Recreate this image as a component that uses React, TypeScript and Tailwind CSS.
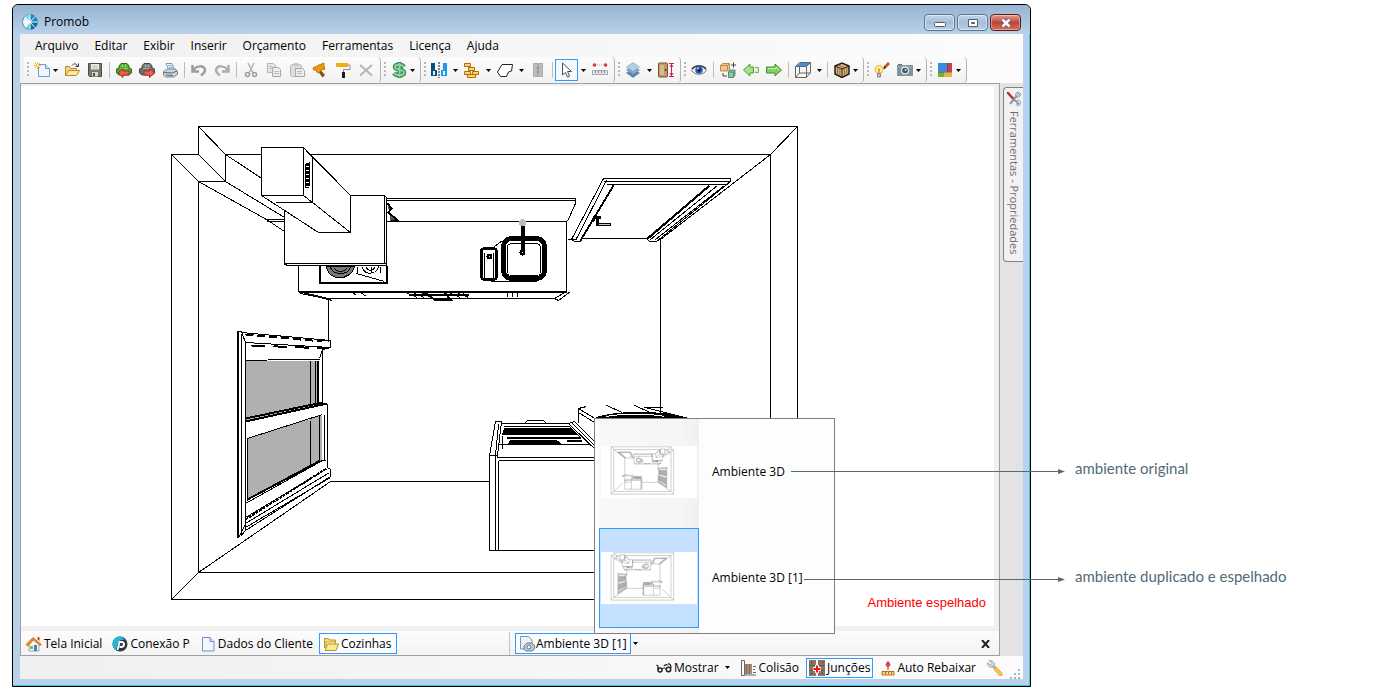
import type { ReactNode } from 'react';
import clsx from 'clsx';

const menuItems = ['Arquivo', 'Editar', 'Exibir', 'Inserir', 'Orçamento', 'Ferramentas', 'Licença', 'Ajuda'];

function Icon({ children }: { children: ReactNode }) {
  return (
    <svg viewBox="0 0 16 16" className="size-4 shrink-0" fill="none" aria-hidden="true">
      {children}
    </svg>
  );
}

const icons = {
  novo: (
    <Icon>
      <path d="M4.500 2.500h7l4 4v8h-11z" fill="#eef6ff" stroke="#6f9fd0" />
      <path d="M11.500 2.500v4h4" fill="#cfe2f7" stroke="#6f9fd0" />
      <path d="M3.500 0v7M0 3.500h7M1 1l5 5M6 1L1 6" stroke="#f2b632" />
      <circle cx="3.500" cy="3.500" r="1.200" fill="#fff3b8" />
    </Icon>
  ),
  abrir: (
    <Icon>
      <path d="M1.500 13.500v-9h4l1 2h6v2" fill="#f6d77b" stroke="#b58a2a" />
      <path d="M1.500 13.500l3-5h11l-3 5z" fill="#fbe7a0" stroke="#b58a2a" />
      <path d="M8 3.500c2-2.500 4.500-2 5.500.5M14.500 1.500v3h-3" stroke="#333" />
    </Icon>
  ),
  salvar: (
    <Icon>
      <path d="M1.500 1.500h13v13h-12l-1-1z" fill="#777a70" stroke="#4a4d44" />
      <path d="M4 2h8v5.500H4z" fill="#eef0ea" />
      <path d="M5 10h6v4.500H5z" fill="#d5d8cf" />
      <path d="M6 11h2v3H6z" fill="#4a4d44" />
      <path d="M5 4h6M5 6h6" stroke="#b8bbb2" />
    </Icon>
  ),
  sofaVerde: (
    <Icon>
      <path d="M3 4l2-2.500h6L13 4v2l2.500 1v4L13 13H3L.500 11V7L3 6z" fill="#4aa62a" stroke="#2d6f14" />
      <path d="M4 6.500h8M4.500 4h7M6.500 2v4M9.500 2v4" stroke="#86cf62" />
      <path d="M2 11l5-4.500v2.500h6v4H7v2.500z" fill="#e8604c" stroke="#a83020" />
    </Icon>
  ),
  sofaCinza: (
    <Icon>
      <path d="M3 4l2-2.500h6L13 4v2l2.500 1v4L13 13H3L.500 11V7L3 6z" fill="#6e6e6e" stroke="#444" />
      <path d="M4 6.500h8M4.500 4h7M6.500 2v4M9.500 2v4" stroke="#a4a4a4" />
      <path d="M15.500 11l-5-4.500v2.500H5v4h5.500v2.500z" fill="#e8604c" stroke="#a83020" />
    </Icon>
  ),
  imprimir: (
    <Icon>
      <path d="M4 1.500h6l2.500 6h-6z" fill="#eef5ff" stroke="#8799ad" />
      <path d="M1.500 9.500l4-2.500h8l2 3v2.500l-4 2.500h-8l-2-2z" fill="#cdd3da" stroke="#7c8590" />
      <path d="M2 10.500l8 .5 5-2M4 13l7 .5" stroke="#5f6771" />
      <path d="M6 3.500h4M7 5.500h4" stroke="#7fb0e6" />
    </Icon>
  ),
  desfazer: (
    <Icon>
      <path d="M1.500 3v6.500H8M2 9c3-6 12-6 12-1 0 2-2 4-4 5.500" stroke="#9b9b9b" strokeWidth="2.500" />
    </Icon>
  ),
  refazer: (
    <Icon>
      <path d="M14.500 3v6.500H8M14 9C11 3 2 3 2 8c0 2 2 4 4 5.500" stroke="#adadad" strokeWidth="2.500" />
    </Icon>
  ),
  recortar: (
    <Icon>
      <path d="M5 1l5 10M11 1L6 11" stroke="#b3b3b3" strokeWidth="1.500" />
      <circle cx="4.500" cy="12.500" r="2" stroke="#9d9d9d" strokeWidth="1.500" />
      <circle cx="11.500" cy="12.500" r="2" stroke="#9d9d9d" strokeWidth="1.500" />
    </Icon>
  ),
  copiar: (
    <Icon>
      <path d="M1.500 1.500h6l2 2v7h-8z" fill="#e6e6e6" stroke="#b5b5b5" />
      <path d="M6.500 5.500h6l2 2v7h-8z" fill="#ededed" stroke="#a8a8a8" />
      <path d="M8 9.500h5M8 11.500h5M3 4.500h3M3 6.500h3" stroke="#bdbdbd" />
    </Icon>
  ),
  colar: (
    <Icon>
      <rect x="1.500" y="2.500" width="11" height="12" rx="2" fill="#dedede" stroke="#b5b5b5" />
      <rect x="4.500" y="1" width="5" height="3" rx="1" fill="#c4c4c4" />
      <path d="M6.500 6.500h7l2 2v6h-9z" fill="#ededed" stroke="#a8a8a8" />
      <path d="M8 9.500h5M8 11.500h5" stroke="#bdbdbd" />
    </Icon>
  ),
  martelo: (
    <Icon>
      <path d="M7 6l6 7-2.500 2.500L5 8z" fill="#8a5410" />
      <path d="M1 6l6-3 5-2v3l1 3-4 1-2 3-2.500-1v-2H1.500z" fill="#e79a10" stroke="#c07c0a" />
    </Icon>
  ),
  rolo: (
    <Icon>
      <path d="M1 1h12v4H1z" fill="#f4ac12" />
      <path d="M13 3h2v4.500H8.500V11" stroke="#8a8a8a" />
      <path d="M7 10h3v6H7z" fill="#1d1d1d" />
    </Icon>
  ),
  excluir: (
    <Icon>
      <path d="M2 3l12 10.500M14 3L2 13.500" stroke="#b5b5b5" strokeWidth="2" />
    </Icon>
  ),
  dinheiro: (
    <Icon>
      <path d="M13 5C11 2 4 2 4 5c0 3.500 9 2 9 5.500 0 3.500-8 3.500-10 .5M8.500 0v16" stroke="#3b8a58" strokeWidth="4.500" />
      <path d="M13 5C11 2 4 2 4 5c0 3.500 9 2 9 5.500 0 3.500-8 3.500-10 .5M8.500 1v14" stroke="#86d6a0" strokeWidth="2" />
    </Icon>
  ),
  espelhar: (
    <Icon>
      <path d="M0 1h4v7h2v6H0z" fill="#0b4f80" />
      <path d="M16 1h-4v7h-2v6h6z" fill="#1c9bea" />
      <path d="M2 9h2v4H2zM12 9h2v4h-2z" fill="#e6f3fc" />
      <path d="M8 0v16" stroke="#111" strokeDasharray="2 1" />
    </Icon>
  ),
  tijolos: (
    <Icon>
      <path d="M.500 1.500h6v3h-6zM4.500 5.500h6v3h-6zM.500 9.500h6v3h-6zM8.500 9.500h6v3h-6zM3.500 12.500h8v3h-8z" fill="#ffd478" stroke="#b06e00" />
    </Icon>
  ),
  forma: (
    <Icon>
      <path d="M5 2.500h10.500l-1 6.500-3 1-2 4.500h-6l-3-4.500z" fill="#fff" stroke="#222" />
    </Icon>
  ),
  grade: (
    <Icon>
      <path d="M3 1h10v14H3z" fill="#bdbdbd" />
      <path d="M8 1v14M6 6h4M6 10h4" stroke="#949494" />
      <path d="M3.500 1.500h9v13h-9z" stroke="#adadad" />
    </Icon>
  ),
  cursor: (
    <Icon>
      <path d="M3.500 1v12l3-2.500 2 4.500 2-1-2-4.500h4z" fill="#fff" stroke="#4d4d4d" />
    </Icon>
  ),
  regua: (
    <Icon>
      <circle cx="2.500" cy="3" r="1.800" fill="#d23a3a" />
      <circle cx="13.500" cy="3" r="1.800" fill="#d23a3a" />
      <path d="M5 3h6" stroke="#aaa" strokeDasharray="1 1" />
      <path d="M.500 8.500h15v4H.500z" fill="#e3e5e9" stroke="#a5a9af" />
      <path d="M3.500 9v2M6.500 9v2M9.500 9v2M12.500 9v2" stroke="#7d8187" />
    </Icon>
  ),
  camadas: (
    <Icon>
      <path d="M8 7l6.500 4L8 15.500 1.500 11z" fill="#5d86ae" stroke="#486e94" strokeWidth=".5" />
      <path d="M8 4l6.500 4L8 12.500 1.500 8z" fill="#83a9cd" stroke="#56799c" strokeWidth=".5" />
      <path d="M8 .500L14.500 5 8 9.500 1.500 5z" fill="#b3cfe8" stroke="#6f93b8" strokeWidth=".5" />
    </Icon>
  ),
  porta: (
    <Icon>
      <rect x=".5" y="1" width="9" height="14" rx="1" fill="#c19a6b" stroke="#74532d" />
      <path d="M2 3h4v10H2z" fill="#d9b98e" />
      <circle cx="7.500" cy="8" r="1" fill="#533" />
      <path d="M11 1.500h5M11 14.500h5M13.500 2v12M12 5l1.500-2.500L15 5M12 11l1.500 2.500L15 11" stroke="#d8145a" />
    </Icon>
  ),
  olho: (
    <Icon>
      <path d="M.500 8.500C4 2.500 12 2.500 15.500 8.500 12 13.500 4 13.500.500 8.500z" fill="#e9eef5" stroke="#777f8c" />
      <path d="M1 7C4 2.500 12 2.500 15 7" stroke="#444" strokeWidth="1.500" />
      <circle cx="8" cy="8" r="3.700" fill="#2a58ad" />
      <circle cx="8" cy="8" r="1.600" fill="#0a1638" />
      <circle cx="7" cy="6.500" r="1" fill="#cfe0ff" />
    </Icon>
  ),
  cubos: (
    <Icon>
      <path d="M.500 3.500l2-2h7V7l-2 2h-7z" fill="#efc489" stroke="#b98a4a" />
      <path d="M.500 3.500h7v5M7.500 3.500l2-2" stroke="#b98a4a" />
      <path d="M8.500 10l1.500-2h5v5l-1.500 2.500h-5z" fill="#8fc9ae" stroke="#4d8c70" />
      <path d="M8.500 10h5v5" stroke="#4d8c70" />
      <path d="M11 3h5M13.500 .5v5M3 11v3h4" stroke="#444" />
    </Icon>
  ),
  anterior: (
    <Icon>
      <path d="M.500 8L7 2v3h3.500v6H7v3z" fill="#a8e08c" stroke="#4f9c35" />
      <path d="M12 5.500h3.500v5H12" fill="#d9f4cb" stroke="#6fb356" />
    </Icon>
  ),
  proximo: (
    <Icon>
      <path d="M15.500 8L9 2v3H.500v6H9v3z" fill="#7fd35c" stroke="#3f8c28" />
      <path d="M2 6.500h8V5l3 3" stroke="#c6f2b2" />
    </Icon>
  ),
  caixa: (
    <Icon>
      <path d="M1 4.500L5 1h10l-3 3.500z" fill="#3c93dc" />
      <path d="M.500 4.500h11v11H.500zM.500 4.500L4.500.5h11v10l-4 5M11.500 4.500l4-4M4.500 5v6h11M4.500 11l-4 4.500" stroke="#666" />
    </Icon>
  ),
  engradado: (
    <Icon>
      <path d="M1 4l7-3 7 3v8l-7 3.500L1 12z" fill="#d8b486" stroke="#2a1c0e" strokeWidth="1.500" />
      <path d="M1 4l7 3 7-3M8 7v8.500" stroke="#2a1c0e" />
      <path d="M3.500 5.500v7M5.800 6.500v7.500M10.500 6.500v7.500M12.800 5.500v7M4 3l7 3" stroke="#7a5c36" strokeWidth=".8" />
    </Icon>
  ),
  lampada: (
    <Icon>
      <circle cx="5" cy="7.500" r="4" fill="#fff3a6" stroke="#e7b52e" />
      <path d="M4 6l1 5 1-5" stroke="#e0a020" />
      <path d="M3.500 11.500h3v3.500h-3z" fill="#b9bfc7" stroke="#7f858d" />
      <path d="M9.500 7l.5-3 4-4 2 2-4 4z" fill="#c35a14" />
      <path d="M9.500 7l.5-3 2 2z" fill="#1c1c1c" />
    </Icon>
  ),
  camera: (
    <Icon>
      <path d="M0 3h16v11H0z" fill="#83919a" />
      <path d="M1 2h4v1H1z" fill="#66737c" />
      <path d="M1 5h14" stroke="#a9b4bb" />
      <circle cx="8" cy="8.500" r="4" fill="#e8eef2" />
      <circle cx="8" cy="8.500" r="2.800" fill="#33566f" />
      <circle cx="8.500" cy="8" r="1" fill="#c8e0f0" />
    </Icon>
  ),
  paleta: (
    <Icon>
      <path d="M1 1h9v9H1z" fill="#3c8be0" />
      <path d="M10 1h5v9h-5z" fill="#c6414b" />
      <path d="M1 10h5v5H1z" fill="#7ab51d" />
      <path d="M6 10h9v5H6z" fill="#e3b253" />
      <path d="M10.500 1v9M6.500 10v5M1 10.500h14" stroke="#0003" />
    </Icon>
  ),
  casa: (
    <Icon>
      <path d="M3 7v8h10V7L8 3z" fill="#f3f6fa" stroke="#9aa7b8" />
      <path d="M0 8.500L7 1.500l8.500 7-1.500 1L7.500 4 2 10z" fill="#f08a1c" stroke="#bb5d0a" strokeWidth=".6" />
      <path d="M11.500 1h2v4l-2-1.500z" fill="#c0452c" />
      <path d="M8 9h3v6H8z" fill="#3d7fc9" />
      <path d="M4 10h3v3H4z" fill="#7cc043" />
    </Icon>
  ),
  conexao: (
    <Icon>
      <circle cx="8" cy="8" r="7.500" fill="#2b3640" />
      <path d="M8 .5a7.500 7.500 0 0 0-4 13.800L6 7c1-3 5-4 7-3A7.500 7.500 0 0 0 8 .5z" fill="#25b6d6" />
      <path d="M5.500 14l2-8h2c4 0 3 5-.5 5H7.500" stroke="#fff" strokeWidth="1.800" />
    </Icon>
  ),
  documento: (
    <Icon>
      <path d="M2.500 1.500h7.500l4 4v9.500H2.500z" fill="#f1f7ff" stroke="#6b93c8" />
      <path d="M10 1.500v4h4" fill="#c9dcf4" stroke="#6b93c8" />
    </Icon>
  ),
  pastas: (
    <Icon>
      <path d="M1.500 12V2.500h4l1 1.500h6v3" fill="#f4dc7c" stroke="#b79325" />
      <path d="M3 12V6h9v2" stroke="#c9a83e" fill="#fff6cc" />
      <path d="M2 14.500l2.500-6.500h11L13 14.500z" fill="#fbe796" stroke="#b79325" />
    </Icon>
  ),
  ambiente: (
    <Icon>
      <path d="M1.500 .5h8l3.500 3.500v9H1.500z" fill="#eaf1fb" stroke="#7795bd" />
      <path d="M5 10l3-3h5l2.500 2.500V13L13 15H7l-2-2z" fill="#c3c9d0" stroke="#6f7883" />
      <circle cx="10" cy="11" r="2" fill="#eef4fa" stroke="#5d7f9f" />
    </Icon>
  ),
  mostrar: (
    <Icon>
      <path d="M.500 5l1.500 1v4M8 6c1.500-2 3-1.500 3.500-.5M12 4c2-.5 3 1.500 3 4" stroke="#222" strokeWidth="1.300" />
      <circle cx="4" cy="10" r="2" stroke="#222" strokeWidth="1.500" />
      <circle cx="12.500" cy="9.500" r="2.200" stroke="#222" strokeWidth="1.500" />
      <path d="M6 9c1-1.500 3-1.500 4 0" stroke="#222" />
    </Icon>
  ),
  colisao: (
    <Icon>
      <path d="M.500 .5h3v15h-3z" fill="#fff" stroke="#666" />
      <path d="M4 4h7v10H4z" fill="#a98a74" />
      <path d="M5.500 4v10M8.500 4v10" stroke="#8a6c57" />
      <path d="M12 6.500h3M12 9.500h2M12 12.500h3M4 15h11" stroke="#666" />
    </Icon>
  ),
  juncoes: (
    <Icon>
      <path d="M0 0h7v16H0zM9 0h7v16H9z" fill="#8d735f" />
      <path d="M0 5.500h7M0 10.500h7M9 5.500h7M9 10.500h7" stroke="#6b5442" />
      <path d="M2 2.500h1M2 13.500h1M13 2.500h1M13 13.500h1" stroke="#3a2a1e" />
      <path d="M6 5h4v2h2v4h-2v2H6v-2H4V7h2z" fill="#fff" />
      <path d="M8 5.500v7M4.500 9h7" stroke="#f01414" strokeWidth="2" />
    </Icon>
  ),
  rebaixar: (
    <Icon>
      <path d="M8 1.500l2 3-2 3-2-3z" fill="#e05058" stroke="#c8242c" />
      <path d="M8 8v2" stroke="#c8242c" />
      <path d="M2 11.500h12v3.500H2z" fill="#fbd68a" stroke="#a8741c" />
      <path d="M5.500 12v2M8.500 12v2M11.500 12v2" stroke="#a8741c" />
    </Icon>
  ),
  chave: (
    <Icon>
      <path d="M6 6l3.500 3.500" stroke="#a9b0b8" strokeWidth="3" />
      <path d="M2 .500l3 3L3.500 5l-3-2.500C0 5.500 2.500 8 5.500 7l2-2C8 2.500 5 0 2 .500z" fill="#d4d9de" stroke="#8b929a" strokeWidth=".7" />
      <path d="M9 9l4.500 5" stroke="#d08c20" strokeWidth="4" strokeLinecap="round" />
      <path d="M9 9l4.500 5" stroke="#ffc54a" strokeWidth="3" strokeLinecap="round" />
    </Icon>
  ),
  ferramentas: (
    <Icon>
      <path d="M11 4.500L4 13" stroke="#8f9bab" strokeWidth="2" />
      <path d="M14.500 2.500l-2 2-1-1 1.500-2C10.500 1 9 3 10 5s4 2 4.500-2.500zM8 10c3-1 3 0 3 4M11 9c3 0 4 2 3 4s-3 2-3 1" stroke="#7d8ba3" />
      <path d="M2 2l5 5.500" stroke="#c6262c" strokeWidth="2.500" strokeLinecap="round" />
      <path d="M7 7.500l6 5.500" stroke="#8390a5" strokeWidth="1.500" />
    </Icon>
  ),
};

type IconName = keyof typeof icons;
type Tool = { icon: IconName; label: string; drop?: 'narrow' | 'wide'; active?: boolean } | '|';

const toolGroups: Tool[][] = [
  [
    { icon: 'novo', label: 'Novo', drop: 'narrow' },
    { icon: 'abrir', label: 'Abrir' },
    { icon: 'salvar', label: 'Salvar' },
    '|',
    { icon: 'sofaVerde', label: 'Importar' },
    { icon: 'sofaCinza', label: 'Exportar' },
    { icon: 'imprimir', label: 'Imprimir' },
    '|',
    { icon: 'desfazer', label: 'Desfazer' },
    { icon: 'refazer', label: 'Refazer' },
    '|',
    { icon: 'recortar', label: 'Recortar' },
    { icon: 'copiar', label: 'Copiar' },
    { icon: 'colar', label: 'Colar' },
    { icon: 'martelo', label: 'Montar' },
    { icon: 'rolo', label: 'Pintar' },
    { icon: 'excluir', label: 'Excluir' },
  ],
  [{ icon: 'dinheiro', label: 'Preço', drop: 'narrow' }],
  [
    { icon: 'espelhar', label: 'Espelhar', drop: 'wide' },
    { icon: 'tijolos', label: 'Paredes', drop: 'wide' },
    { icon: 'forma', label: 'Forma', drop: 'wide' },
    { icon: 'grade', label: 'Grade' },
    '|',
    { icon: 'cursor', label: 'Selecionar', drop: 'wide', active: true },
    { icon: 'regua', label: 'Medir' },
  ],
  [
    { icon: 'camadas', label: 'Camadas', drop: 'wide' },
    { icon: 'porta', label: 'Altura' },
  ],
  [
    { icon: 'olho', label: 'Visualizar' },
    '|',
    { icon: 'cubos', label: 'Agrupar' },
    { icon: 'anterior', label: 'Anterior' },
    { icon: 'proximo', label: 'Próximo' },
    '|',
    { icon: 'caixa', label: 'Vista', drop: 'wide' },
    '|',
    { icon: 'engradado', label: 'Módulo', drop: 'narrow' },
  ],
  [
    { icon: 'lampada', label: 'Iluminação' },
    { icon: 'camera', label: 'Câmera', drop: 'narrow' },
  ],
  [{ icon: 'paleta', label: 'Janelas', drop: 'narrow' }],
];

function Caret() {
  return (
    <svg viewBox="0 0 5 3" className="h-[3px] w-[5px] shrink-0" aria-hidden="true">
      <path d="M0 0h5L2.500 3z" fill="#000" />
    </svg>
  );
}

function ToolButton({ tool }: { tool: Tool }) {
  if (tool === '|') {
    return <span className="flex h-4 w-[6px] justify-center"><span className="w-px bg-[#bdbdbd]" /></span>;
  }
  return (
    <button
      aria-label={tool.label}
      className={clsx(
        'flex h-[22px] items-center justify-between',
        !tool.drop && 'w-[23px]',
        tool.drop === 'narrow' && 'w-[30px] pr-[2px]',
        tool.drop === 'wide' && 'w-[33px] pr-[2px]'
      )}
    >
      <span
        className={clsx(
          'flex h-[22px] w-[23px] shrink-0 items-center border pl-[3px]',
          tool.active ? 'border-[#3399ff] bg-[#f4f9ff]' : 'border-transparent'
        )}
      >
        {icons[tool.icon]}
      </span>
      {tool.drop && <Caret />}
    </button>
  );
}

function Toolbar() {
  return (
    <div className="flex h-[26px] pl-1">
      {toolGroups.map((group, i) => (
        <div
          key={i}
          className="flex items-center rounded-r-sm border-r border-[#b4b4b4] bg-gradient-to-b from-[#fcfcfc] to-[#f1f1f1] pr-[3px]"
        >
          <span className="mr-px ml-[3px] h-4 w-[2px] bg-[repeating-linear-gradient(#b8b8b8_0_2px,transparent_2px_4px)]" />
          {group.map((tool, j) => (
            <ToolButton key={j} tool={tool} />
          ))}
        </div>
      ))}
    </div>
  );
}

/* Kitchen seen from above, shared by the viewport and the thumbnails */
function Room() {
  return (
    <g fill="none" stroke="currentColor">
      {/* walls */}
      <path d="M198 154V126H797V599H171V154H198L225 181V154H770V572H198V181H225M198 126L225 154M171 154L198 181M171 599L198 572L330 481H489M797 126L770 154L660 239V480H600M797 599L770 572L680 490M567 239H575M328 298V341" />
      <path d="M225 154L284 193M225 181L284 217M198 181L266 219L284 231M266 219H284M266 221H284" />

      {/* back splash and counter */}
      <path d="M386 198H575V203L567 221M386 200H575M386 221H566V291M298 264V291L328 298H554L566 291M300 293L330 299M304 293L332 300M554 298L558 300L570 291" />
      <path d="M298 291H566" strokeWidth="2" />
      <path d="M405 292l12 5M412 292l12 5M420 292l12 5M448 292l12 5M456 292l12 5M462 292l6 5M352 292l4 3M360 292l6 4M507 292v4M512 292v4M517 292v4" />
      <path d="M408 294H468M424 292L434 299H450L444 292" strokeWidth="2" />

      {/* hood */}
      <path d="M284 205H320V195H384L386 197V265H288L284 263Z" fill="#fff" stroke="none" />
      <path d="M284 210V264L288 265H386V197L384 195H350M384 195V263M284 263H386" />
      <path d="M303 147L350 195V232H318L261 195Z" fill="#fff" />
      <path d="M303 147L312 157V202L350 232M312 157L350 195M275 202H312L303 195" />
      <path d="M261 147H303V195H261Z" fill="#fff" />
      <path d="M305 163V187M309 161V185" />
      <path d="M307 162V187" strokeWidth="3" strokeDasharray="3 1" />

      {/* cooktop */}
      <path d="M319 265V282H386V265" strokeWidth="2" />
      <path d="M326 266C328 281 350 281 354 266Z" fill="#777" />
      <path d="M330 267C333 275 347 275 350 267M334 268C337 272 343 272 346 268M356 273L384 281M357 266v6M362 266C362 275 376 275 378 266M366 266C366 271 374 271 374 266M380 266v6M371 266v6" />
      <path d="M387 203L391 208L388 212L397 220L390 220" fill="#555" strokeWidth="2" />

      {/* sink */}
      <rect x="503" y="238" width="41" height="40" rx="8" strokeWidth="5" />
      <rect x="507" y="243" width="33" height="32" rx="4" />
      <rect x="481" y="248" width="15" height="31" rx="3" strokeWidth="3" />
      <path d="M484 252V278M493 252V278M494 246L502 240M490 281H536" />
      <circle cx="489" cy="256" r="2" strokeWidth="2" />
      <path d="M522 225V250" strokeWidth="4" />
      <circle cx="522" cy="252" r="2" fill="#fff" strokeWidth="2" />
      <circle cx="522" cy="222" r="3" fill="#bbb" stroke="#bbb" />

      {/* door */}
      <path d="M603 178H730V181L656 241H649L647 239L710 185M603 178L571 239L574 241H580L613 185M606 180L575 240M603 181H730M606 184H725M580 238H647M717 185L650 239M724 185L655 239" />
      <path d="M613 185L580 240M709 185L647 238" strokeWidth="2" />
      <path d="M592 221L594 217H600" strokeWidth="3" />
      <path d="M597 218V224H610" strokeWidth="3" />
      <path d="M598 224H609" stroke="#ccc" />

      {/* side window */}
      <path d="M245 360H318V404L245 421ZM247 438L321 415V460L247 499Z" fill="#b0b0b0" stroke="none" />
      <path d="M241 333V534M245 342V530M236 331H241L245 342M238 537L245 524M245 360L290 359H319M310 360V405M315 360V404M310 420V464M319 414V460M322 350V402M324 414V460M327 403V467L330 469V476L245 530L240 536M330 340V347L322 349L319 358M247 438L322 414M247 438V500M245 503L322 460M245 523L329 472M245 527L330 477M245 517L327 468M325 460L320 460M245 342L330 347M241 332L330 340H322" />
      <path d="M317 360V403M237 331V537M245 421L327 403M245 418L322 402M247 499L320 460" strokeWidth="2" />
      <path d="M245 334L322 341" strokeDasharray="8 4" strokeWidth="2" />
      <path d="M251 345L329 348" strokeDasharray="14 8" strokeWidth="2" />
      <path d="M245 519L326 468" strokeWidth="2" strokeDasharray="3 1" />

      {/* base units */}
      <path d="M489 455L495 421H501L497 455V457H660V550H489V455H497M498 424L495 455M495 455V550M498 460V550M498 460H660M594 460V550M501 423H568L574 421L600 447M568 423L600 454M571 422L598 449M503 426H569L580 437M497 444H590M502 435V448M524 423L527 420H543L546 423" />
      <path d="M504 428H570L577 434H502Z" fill="currentColor" />
      <path d="M510 440H556L560 443H508Z" fill="currentColor" />
      <path d="M506 437H580M566 440H581" strokeWidth="2" />
      <path d="M578 422V408L586 406M578 408L596 419M578 412L594 422M606 405L622 412M634 405L650 412M643 407H662M645 407L688 418" />
      <path d="M594 418C610 411 660 409 688 418Z" fill="currentColor" />
      <path d="M606 416C620 413 650 413 664 416" stroke="#fff" />
    </g>
  );
}

function Thumbnail({ mirrored }: { mirrored?: boolean }) {
  return (
    <span className="block h-[52px] w-24 bg-white">
      <svg viewBox="70 118 960 520" className="h-[52px] w-24 text-neutral-400" aria-hidden="true">
        <g strokeWidth="5" transform={mirrored ? undefined : 'matrix(-1 0 0 1 968 0)'}>
          <Room />
        </g>
      </svg>
    </span>
  );
}

function EnvironmentMenu() {
  const rows = [
    { label: 'Ambiente 3D', mirrored: false },
    { label: 'Ambiente 3D [1]', mirrored: true },
  ];
  return (
    <div
      role="menu"
      className="absolute bottom-5 left-[79px] z-10 flex w-[241px] flex-col gap-1.5 border border-[#808080] bg-[linear-gradient(90deg,#fdfdfd_0_4px,#f8f8f8_4px,#f6f6f6_84px,#f0f0f0_104px,#fdfdfd_104px)] px-1 pt-[3px] pb-[5px]"
    >
      {rows.map((row) => (
        <button key={row.label} role="menuitem" className="flex items-center gap-[13px] text-left">
          <span
            className={clsx(
              'flex size-[100px] items-center justify-center border',
              row.mirrored ? 'border-[#3399ff] bg-[#c4e1ff]' : 'border-transparent'
            )}
          >
            <Thumbnail mirrored={row.mirrored} />
          </span>
          {row.label}
        </button>
      ))}
    </div>
  );
}

function TitleBar() {
  return (
    <header className="flex h-[29px] items-center gap-1.5 rounded-t-md bg-gradient-to-b from-[#98b4d2] to-[#b9d1ea] pt-1 pr-[9px] pl-[9px]">
      <svg viewBox="0 0 16 16" className="size-4" aria-hidden="true">
        <circle cx="8" cy="8" r="7.500" fill="#e8f6fc" stroke="#3c8fb8" />
        <path d="M8 8V.5A7.500 7.500 0 0 1 15.500 8z" fill="#1489bd" />
        <path d="M8 8h7.500A7.500 7.500 0 0 1 8 15.500z" fill="#0f6ea3" />
        <path d="M8 8L4 14.500A7.500 7.500 0 0 0 8 15.500z" fill="#5cc3e4" />
        <path d="M8 8L2 3.500A7.500 7.500 0 0 1 8 .5z" fill="#83d4ec" />
        <path d="M8 8L3 3M8 8v7.500M8 8V.5M8 8h7.500M8 8l5-5.500M8 8l5 5.500M8 8H.5M8 8l-5 5" stroke="#fff" />
      </svg>
      <h1 className="flex-1">Promob</h1>
      <div className="flex gap-[2px] self-end pb-[3px]">
        <button aria-label="Minimizar" className="flex h-[17px] w-[31px] items-center justify-center rounded-sm border border-[#5d7590] bg-gradient-to-b from-[#c3d5e9] via-[#a5bdd8] to-[#b9d0e9] shadow-[inset_0_0_0_1px_#ffffff80]">
          <svg viewBox="0 0 12 8" className="h-2 w-3">
            <rect x=".5" y="3.500" width="11" height="4" rx="1" fill="#fff" stroke="#535a6c" />
          </svg>
        </button>
        <button aria-label="Maximizar" className="flex h-[17px] w-[31px] items-center justify-center rounded-sm border border-[#5d7590] bg-gradient-to-b from-[#c3d5e9] via-[#a5bdd8] to-[#b9d0e9] shadow-[inset_0_0_0_1px_#ffffff80]">
          <svg viewBox="0 0 12 10" className="h-2.5 w-3">
            <path d="M1.500 1.500h9v7h-9zM4.500 4.500v1h3v-1z" fill="#fff" fillRule="evenodd" stroke="#535a6c" />
          </svg>
        </button>
        <button aria-label="Fechar" className="flex h-[17px] w-[31px] items-center justify-center rounded-sm border border-[#5b1d16] bg-gradient-to-b from-[#e2a094] via-[#bd4433] to-[#d4705f] shadow-[inset_0_0_0_1px_#ffffff60]">
          <svg viewBox="0 0 12 10" className="h-2.5 w-3">
            <path d="M2.500 1.500l7 7M9.500 1.500l-7 7" stroke="#535a6c" strokeWidth="4" />
            <path d="M2.500 1.500l7 7M9.500 1.500l-7 7" stroke="#fff" strokeWidth="2.500" />
          </svg>
        </button>
      </div>
    </header>
  );
}

const fileTabs: { icon: IconName; label: string; active?: boolean }[] = [
  { icon: 'casa', label: 'Tela Inicial' },
  { icon: 'conexao', label: 'Conexão P' },
  { icon: 'documento', label: 'Dados do Cliente' },
  { icon: 'pastas', label: 'Cozinhas', active: true },
];

function TabStrip() {
  return (
    <div className="flex h-6 items-center bg-gradient-to-b from-[#fcfcfc] to-[#f3f3f3] pt-px">
      <nav className="flex h-full w-[489px] items-center gap-px border-r border-[#c4c4c4] pl-px">
        {fileTabs.map((tab) => (
          <button
            key={tab.label}
            className={clsx(
              'flex h-[21px] items-center gap-[2px] border pr-1 pl-[3px]',
              tab.active ? 'border-[#3399ff] bg-[#fafcff]' : 'border-transparent'
            )}
          >
            {icons[tab.icon]}
            {tab.label}
          </button>
        ))}
      </nav>
      <div className="relative ml-[5px] flex items-center gap-px">
        <button className="flex h-[21px] w-[116px] items-center gap-px border border-[#3399ff] bg-[#fafcff] pl-[3px] whitespace-nowrap">
          {icons.ambiente}
          Ambiente 3D [1]
        </button>
        <button aria-label="Escolher ambiente" className="p-px">
          <Caret />
        </button>
        <EnvironmentMenu />
      </div>
      <button aria-label="Fechar ambiente" className="mr-[9px] ml-auto">
        <svg viewBox="0 0 9 8" className="h-2 w-[9px]">
          <path d="M1 0l7 8M8 0L1 8" stroke="#222" strokeWidth="2" />
        </svg>
      </button>
    </div>
  );
}

function StatusBar() {
  return (
    <footer className="flex h-[23px] items-center justify-end gap-[3px] bg-gradient-to-r from-[#f0f0f0] to-[#fcfcfc] pr-[3px]">
      <button className="flex items-center gap-[2px] px-1">
        {icons.mostrar}
        Mostrar
        <span className="pl-1"><Caret /></span>
      </button>
      <button className="flex items-center gap-[2px] px-1">{icons.colisao}Colisão</button>
      <button className="flex h-5 items-center gap-[2px] border border-[#3399ff] bg-[#fafcff] px-[2px]">
        {icons.juncoes}
        Junções
      </button>
      <button className="flex items-center gap-px px-1">{icons.rebaixar}Auto Rebaixar</button>
      <button aria-label="Configurações" className="px-1">{icons.chave}</button>
      <svg viewBox="0 0 10 10" className="size-2.5 self-end" aria-hidden="true">
        <path d="M8 0h2v2H8zM8 4h2v2H8zM8 8h2v2H8zM4 4h2v2H4zM4 8h2v2H4zM0 8h2v2H0z" fill="#b0b0b0" />
      </svg>
    </footer>
  );
}

function Note({ text, line }: { text: string; line: string }) {
  return (
    <p className="relative h-[22px] leading-[22px]">
      <span className={clsx('absolute top-3.5 right-full z-20 mr-[10px] flex items-center', line)}>
        <span className="-my-1 h-px flex-1 bg-[#526a79]" />
        <svg viewBox="0 0 7 5" className="-my-1 h-[5px] w-[7px]" aria-hidden="true">
          <path d="M0 0l7 2.500L0 5z" fill="#526a79" />
        </svg>
      </span>
      {text}
    </p>
  );
}

export default function App() {
  return (
    <div className="flex min-h-screen bg-white pt-1 pb-1.5 pl-3 font-['Open_Sans',sans-serif] text-xs text-black">
      <div className="flex min-w-0 flex-1 flex-col rounded-t-md border border-black bg-[#b9d1ea]">
        <TitleBar />
        <div className="flex flex-1 flex-col border-r border-b border-[#35c5e0] pr-1.5 pb-1.5 pl-[7px]">
          <nav className="flex h-[23px] items-center gap-4 bg-gradient-to-r from-[#f0f0f0] to-[#fcfcfc] pl-[15px]">
            {menuItems.map((item) => (
              <button key={item}>{item}</button>
            ))}
          </nav>
          <div className="bg-gradient-to-r from-[#f0f0f0] to-[#fcfcfc]">
            <Toolbar />
          </div>

          <div className="flex flex-1">
            <div className="flex min-w-0 flex-1 flex-col border border-[#a0a0a0] bg-[#f0f0f0]">
              <main className="relative mt-[2px] mr-[5px] mb-[5px] flex-1 bg-white">
                <svg
                  viewBox="21 86 973 540"
                  className="absolute inset-0 size-full"
                  shapeRendering="crispEdges"
                  role="img"
                  aria-label="Cozinha"
                >
                  <g transform="translate(.5 .5)">
                    <Room />
                  </g>
                </svg>
                <p className="absolute right-2 bottom-[15px] font-['Liberation_Sans',sans-serif] text-[13px] leading-4 text-[#ff0000]">
                  Ambiente espelhado
                </p>
              </main>
              <TabStrip />
            </div>
            <aside className="flex w-[23px] justify-end bg-[#e3e3e3] pt-1">
              <button className="flex h-[175px] w-5 flex-col items-center gap-1 rounded-l-sm border border-r-0 border-[#808080] bg-[#f2f2f2] pt-[3px] text-[11px] text-[#6d6d6d]">
                {icons.ferramentas}
                <span className="leading-4 whitespace-nowrap [writing-mode:vertical-rl]">Ferramentas - Propriedades</span>
              </button>
            </aside>
          </div>

          <StatusBar />
        </div>
      </div>

      <aside className="flex w-[348px] flex-col gap-[86px] pt-[453px] pl-11 font-['Lato',sans-serif] text-[15px] text-[#526a79]">
        <Note text="ambiente original" line="w-[274px]" />
        <Note text="ambiente duplicado e espelhado" line="w-[261px]" />
      </aside>
    </div>
  );
}
